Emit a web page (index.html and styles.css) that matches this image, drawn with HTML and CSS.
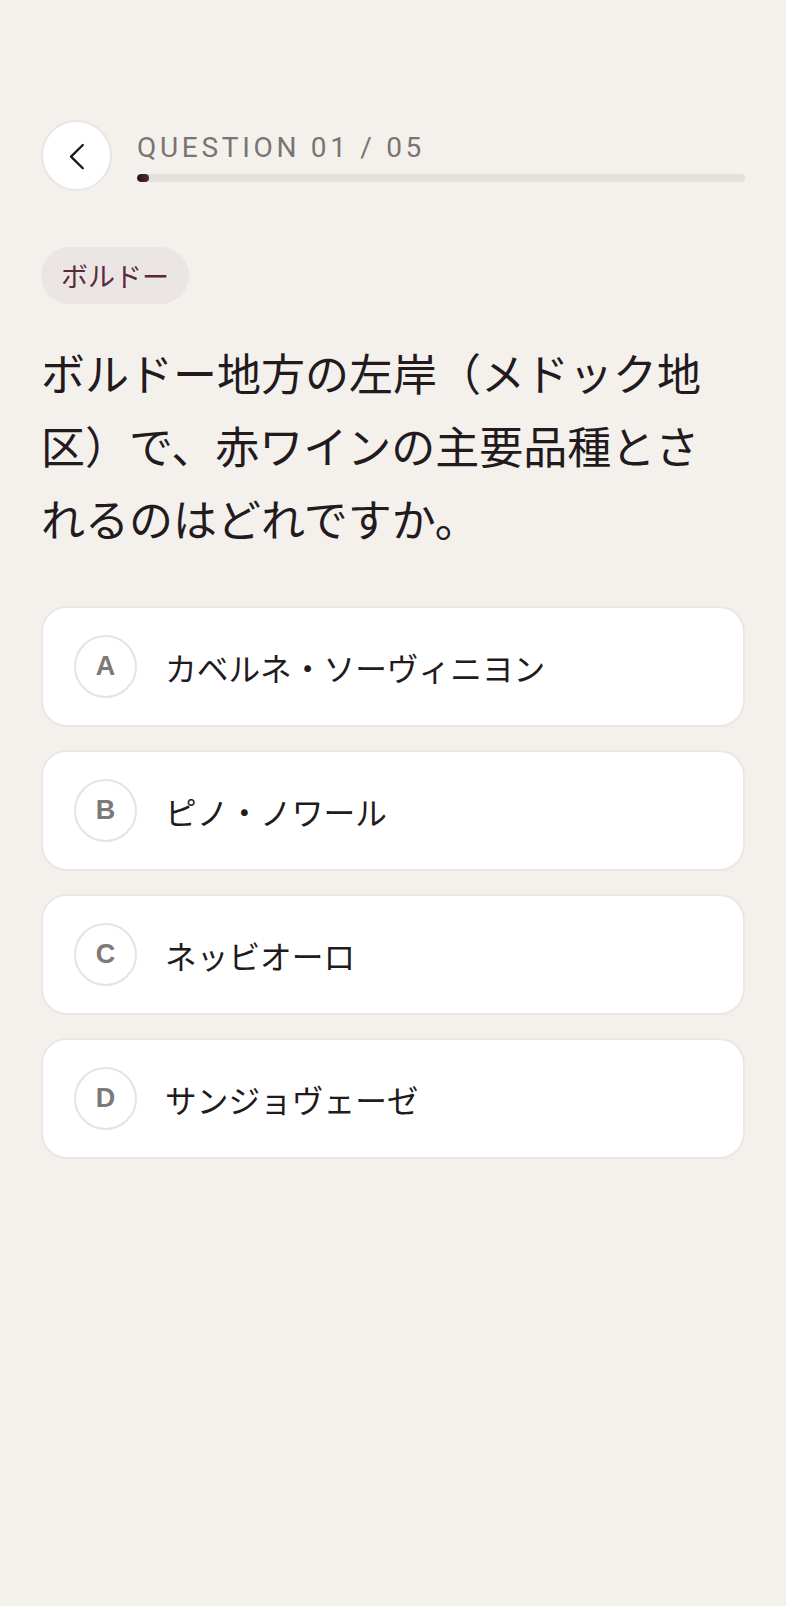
FILE: index.html
```html
<!DOCTYPE html>
<html lang="ja">
<head>
<meta charset="utf-8">
<title>Quiz</title>
<link rel="stylesheet" href="styles.css">
</head>
<body>
<main class="page">
  <header class="top">
    <button class="back" aria-label="戻る">
      <svg width="70" height="70" viewBox="0 0 70 70"><polyline points="40.8,24 29,35.6 40.8,47.2" fill="none" stroke="#1e1518" stroke-width="2.3" stroke-linecap="round" stroke-linejoin="round"/></svg>
    </button>
    <div class="progress">
      <div class="label">QUESTION 01 / 05</div>
      <div class="track"><div class="fill"></div></div>
    </div>
  </header>

  <span class="tag">ボルドー</span>

  <h1 class="question">ボルドー地方の左岸（メドック地区）で、赤ワインの主要品種とされるのはどれですか。</h1>

  <ul class="options">
    <li class="option"><span class="letter">A</span><span class="text">カベルネ・ソーヴィニヨン</span></li>
    <li class="option"><span class="letter">B</span><span class="text">ピノ・ノワール</span></li>
    <li class="option"><span class="letter">C</span><span class="text">ネッビオーロ</span></li>
    <li class="option"><span class="letter">D</span><span class="text">サンジョヴェーゼ</span></li>
  </ul>
</main>
</body>
</html>
```
FILE: styles.css
```css
html, body {
  margin: 0;
  padding: 0;
  background: #f4f1ed;
}
body {
  font-family: "Noto Sans CJK JP", "Noto Sans", sans-serif;
  color: #221a1d;
  min-height: 1606px;
}
.page {
  padding: 120px 41px 0 41px;
}
.top {
  display: flex;
  align-items: flex-start;
  gap: 25px;
}
.back {
  flex: none;
  width: 71px;
  height: 71px;
  border-radius: 50%;
  background: #ffffff;
  border: 2px solid #e9e5e2;
  padding: 0;
  margin: 0;
  display: flex;
  align-items: center;
  justify-content: center;
  box-sizing: border-box;
}
.back svg {
  flex: none;
}
.progress {
  flex: 1;
  padding-top: 11px;
}
.label {
  font-family: Roboto, "Liberation Sans", sans-serif;
  font-size: 28px;
  line-height: 34px;
  letter-spacing: 3.7px;
  color: #7a7472;
  margin-bottom: 9px;
}
.track {
  height: 8px;
  border-radius: 4px;
  background: #e4e0dc;
  overflow: hidden;
}
.fill {
  width: 12px;
  height: 8px;
  border-radius: 4px;
  background: linear-gradient(90deg, #2a0f19, #5e2341);
}
.tag {
  display: inline-flex;
  align-items: center;
  height: 57px;
  margin-top: 56px;
  padding: 0 20px;
  border-radius: 29px;
  background: #ebe6e4;
  color: #5b2840;
  font-size: 27px;
}
.question {
  margin: 32px 0 0 0;
  padding-right: 8px;
  font-size: 44px;
  line-height: 73px;
  font-weight: 400;
  color: #221a1d;
}
.options {
  list-style: none;
  margin: 51px 0 0 0;
  padding: 0;
  display: flex;
  flex-direction: column;
  gap: 23px;
}
.option {
  display: flex;
  align-items: center;
  gap: 28px;
  height: 121px;
  box-sizing: border-box;
  padding: 0 31px;
  background: #ffffff;
  border: 2px solid #ebe7e4;
  border-radius: 26px;
}
.letter {
  flex: none;
  width: 63px;
  height: 63px;
  box-sizing: border-box;
  border: 2px solid #e7e3e0;
  border-radius: 50%;
  display: flex;
  align-items: center;
  justify-content: center;
  font-family: "Liberation Sans", Arial, sans-serif;
  font-weight: 700;
  font-size: 27px;
  color: #7e7878;
}
.text {
  font-size: 31.7px;
  color: #221a1d;
}
```
